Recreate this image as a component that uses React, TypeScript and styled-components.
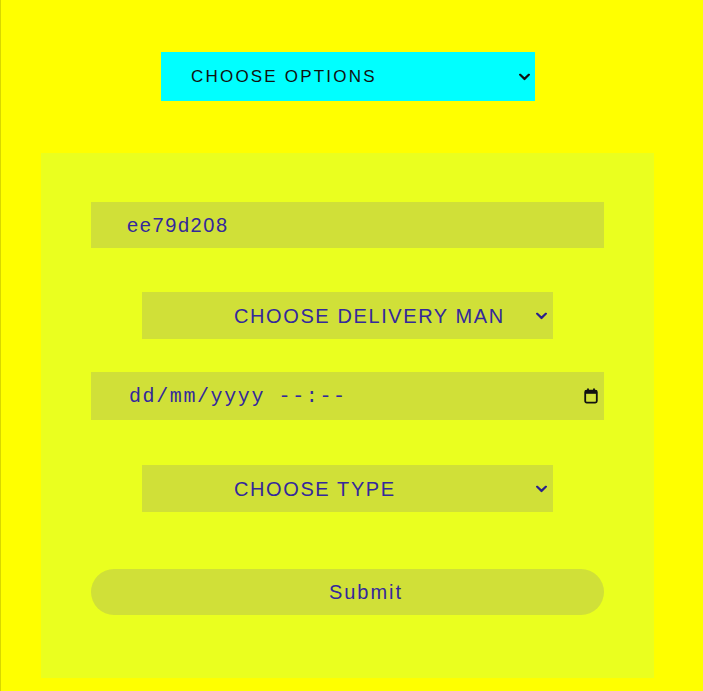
import React from "react";
import styled, { createGlobalStyle } from "styled-components";

const Global = createGlobalStyle`
  html, body { margin: 0; padding: 0; background: #ffff00; }
  body { font-family: "Liberation Sans", Arial, sans-serif; }
`;

const Page = styled.div`
  min-height: 691px;
  box-sizing: border-box;
  background: #ffff00;
  border-left: 1px solid #d8d800;
  width: 695px;
  padding-top: 52px;
  display: flex;
  flex-direction: column;
  align-items: center;
`;

const SelectWrap = styled.div<{ $w: number; $h: number; $mt: number; $mb: number; $right: number }>`
  position: relative;
  width: ${(p) => p.$w}px;
  height: ${(p) => p.$h}px;
  margin-top: ${(p) => p.$mt}px;
  margin-bottom: ${(p) => p.$mb}px;
  & > svg {
    position: absolute;
    right: ${(p) => p.$right}px;
    top: 50%;
    transform: translateY(-50%);
    pointer-events: none;
  }
`;

const OptionsSelect = styled.select`
  appearance: none;
  -webkit-appearance: none;
  width: 100%;
  height: 100%;
  box-sizing: border-box;
  background: #00ffff;
  color: #111;
  border: none;
  outline: none;
  border-radius: 0;
  padding: 0 24px 0 30px;
  font-family: "Liberation Sans", Arial, sans-serif;
  font-size: 17px;
  letter-spacing: 2.2px;
`;

const Card = styled.form`
  width: 613px;
  height: 525px;
  box-sizing: border-box;
  margin-left: -1px;
  background: #eaff1f;
  padding-top: 49px;
  display: flex;
  flex-direction: column;
  align-items: center;
`;

const fieldBase = `
  box-sizing: border-box;
  border: none;
  outline: none;
  border-radius: 0;
  background: #d0e038;
  color: #34289c;
  font-family: "Liberation Sans", Arial, sans-serif;
  font-size: 20px;
  letter-spacing: 1.6px;
`;

const TextField = styled.input`
  ${fieldBase}
  width: 513px;
  height: 46px;
  padding: 0 12px 0 36px;
`;

const ChoiceSelect = styled.select`
  ${fieldBase}
  appearance: none;
  -webkit-appearance: none;
  width: 100%;
  height: 100%;
  padding: 0 24px 0 92px;
`;

const DateField = styled.div`
  ${fieldBase}
  width: 513px;
  height: 48px;
  margin-top: 33px;
  padding: 0 6px 0 38px;
  display: flex;
  align-items: center;
  font-family: "Liberation Mono", "Courier New", monospace;
  white-space: pre;
`;

const DateText = styled.span`
  flex: 1;
`;

const SubmitButton = styled.button`
  ${fieldBase}
  width: 513px;
  height: 46px;
  margin-top: 57px;
  border-radius: 23px;
  padding: 0 0 0 37px;
  letter-spacing: 2px;
  cursor: pointer;
`;

const Chevron = ({ color }: { color: string }) => (
  <svg width="11" height="7" viewBox="0 0 11 7" fill="none">
    <path d="M1.2 1.2 L5.5 5.4 L9.8 1.2" stroke={color} strokeWidth="2.2" strokeLinecap="square" />
  </svg>
);

const CalendarIcon = () => (
  <svg width="14" height="16" viewBox="0 0 14 16" fill="none">
    <path d="M4 0.5v3M10 0.5v3" stroke="#111" strokeWidth="1.8" />
    <rect x="1.2" y="2.6" width="11.6" height="12" rx="1.5" stroke="#111" strokeWidth="1.8" />
    <rect x="1.2" y="2.6" width="11.6" height="3.2" fill="#111" />
  </svg>
);

export default function App() {
  return (
    <>
      <Global />
      <Page>
        <SelectWrap $w={374} $h={49} $mt={0} $mb={52} $right={5}>
          <OptionsSelect defaultValue="">
            <option value="">CHOOSE OPTIONS</option>
          </OptionsSelect>
          <Chevron color="#111" />
        </SelectWrap>
        <Card onSubmit={(e) => e.preventDefault()}>
          <TextField type="text" defaultValue="ee79d208" />
          <SelectWrap $w={411} $h={47} $mt={44} $mb={0} $right={6}>
            <ChoiceSelect defaultValue="">
              <option value="">CHOOSE DELIVERY MAN</option>
            </ChoiceSelect>
            <Chevron color="#2a1f8c" />
          </SelectWrap>
          <DateField>
            <DateText>dd/mm/yyyy --:--</DateText>
            <CalendarIcon />
          </DateField>
          <SelectWrap $w={411} $h={47} $mt={45} $mb={0} $right={6}>
            <ChoiceSelect defaultValue="">
              <option value="">CHOOSE TYPE</option>
            </ChoiceSelect>
            <Chevron color="#2a1f8c" />
          </SelectWrap>
          <SubmitButton type="submit">Submit</SubmitButton>
        </Card>
      </Page>
    </>
  );
}
